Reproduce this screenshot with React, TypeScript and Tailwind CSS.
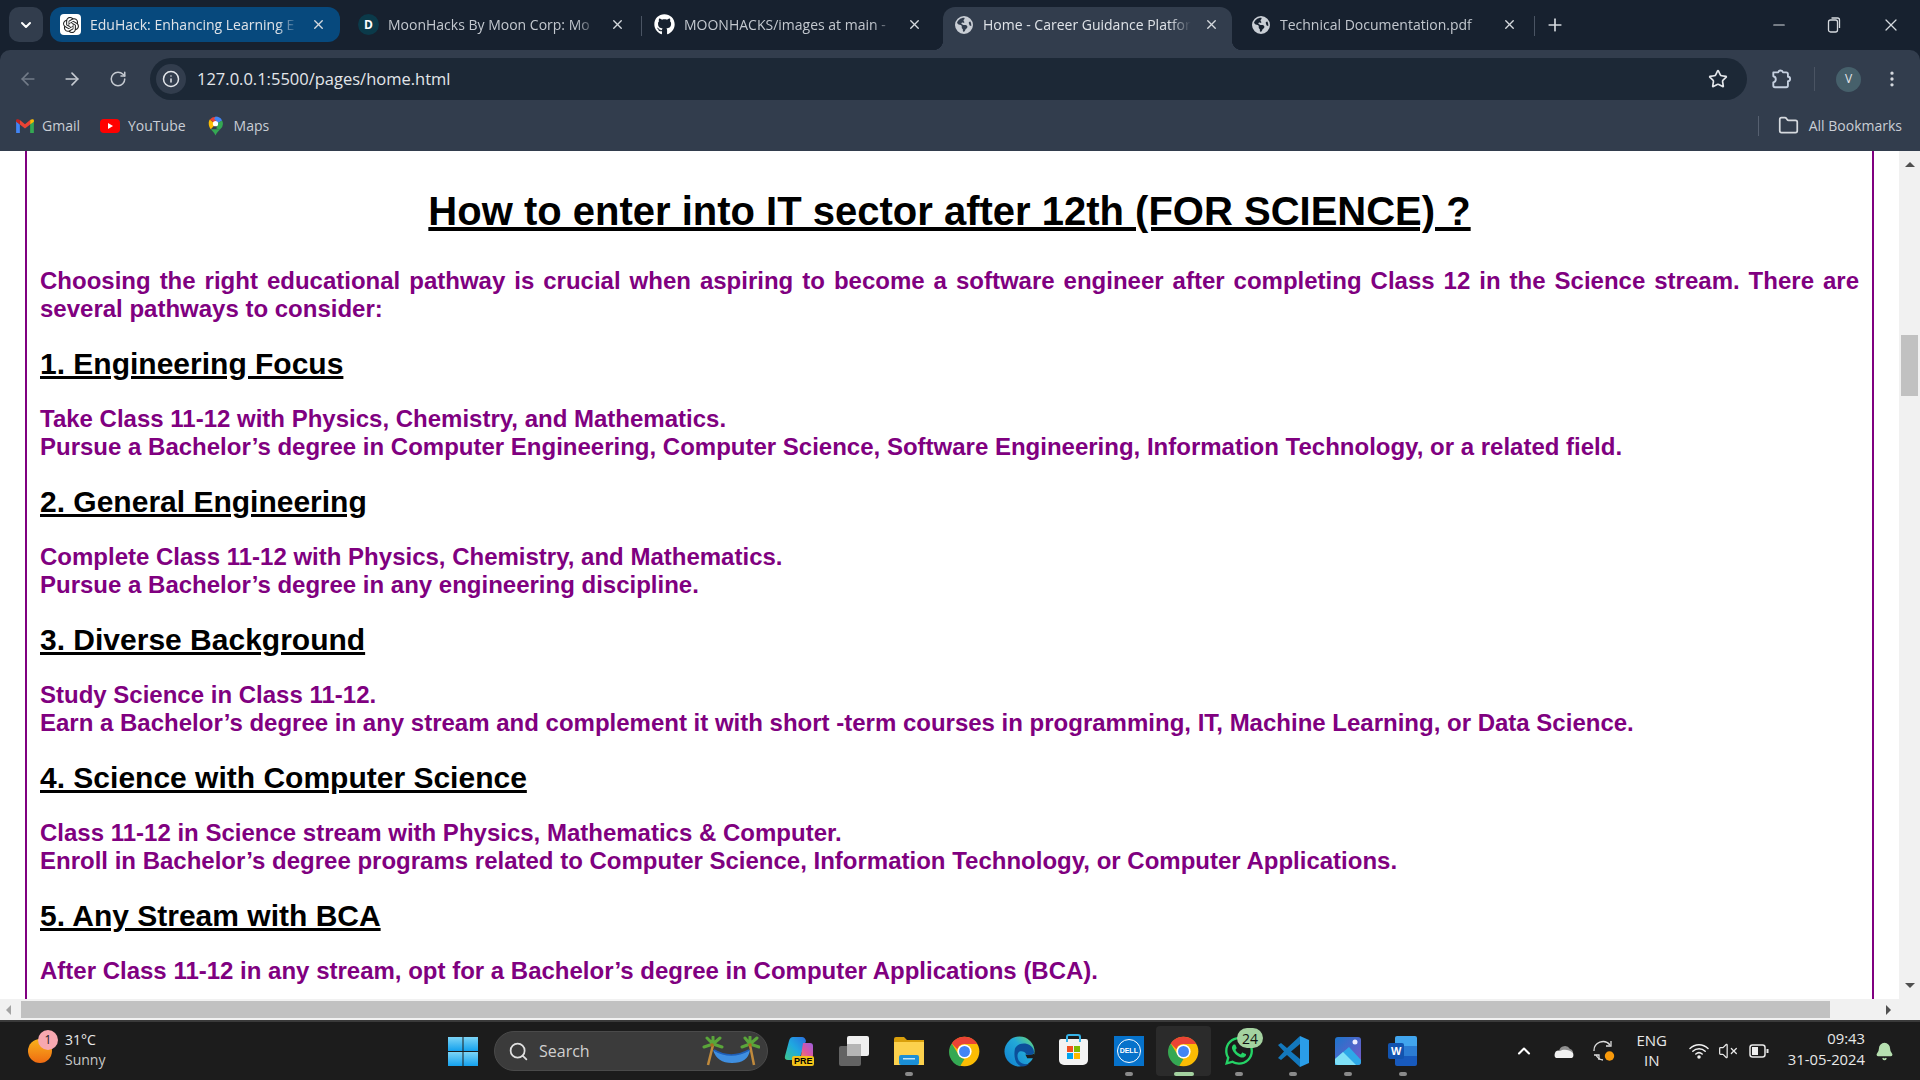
import { ReactNode } from "react";
import { ArrowLeft, ArrowRight, Bell, ChevronDown, ChevronUp, EllipsisVertical, Folder, Info, Minus, Plus, RotateCw, Search, Star, VolumeX, X } from "lucide-react";
import { FaGithub, FaWhatsapp } from "react-icons/fa";
import { FaEarthAmericas } from "react-icons/fa6";
import { SiOpenai } from "react-icons/si";

const sections = [
  {
    title: "1. Engineering Focus",
    lines: [
      "Take Class 11-12 with Physics, Chemistry, and Mathematics.",
      "Pursue a Bachelor’s degree in Computer Engineering, Computer Science, Software Engineering, Information Technology, or a related field.",
    ],
  },
  {
    title: "2. General Engineering",
    lines: ["Complete Class 11-12 with Physics, Chemistry, and Mathematics.", "Pursue a Bachelor’s degree in any engineering discipline."],
  },
  {
    title: "3. Diverse Background",
    lines: [
      "Study Science in Class 11-12.",
      "Earn a Bachelor’s degree in any stream and complement it with short -term courses in programming, IT, Machine Learning, or Data Science.",
    ],
  },
  {
    title: "4. Science with Computer Science",
    lines: [
      "Class 11-12 in Science stream with Physics, Mathematics & Computer.",
      "Enroll in Bachelor’s degree programs related to Computer Science, Information Technology, or Computer Applications.",
    ],
  },
  {
    title: "5. Any Stream with BCA",
    lines: ["After Class 11-12 in any stream, opt for a Bachelor’s degree in Computer Applications (BCA)."],
  },
];

function ChromeLogo({ size = 31 }: { size?: number }) {
  return (
    <svg width={size} height={size} viewBox="0 0 48 48">
      <circle cx="24" cy="24" r="23" fill="#fbbc04" />
      <path d="M24 1a23 23 0 0 1 19.900 11.500H24a11.500 11.500 0 0 0-10.900 7.900L4.200 11.600A23 23 0 0 1 24 1z" fill="#ea4335" />
      <path d="M4.200 11.600l10.900 17.900A11.500 11.500 0 0 0 24 35.500l-7 11.400A23 23 0 0 1 4.200 11.600z" fill="#34a853" />
      <circle cx="24" cy="24" r="11" fill="#fff" />
      <circle cx="24" cy="24" r="8.500" fill="#4285f4" />
    </svg>
  );
}

function Tab({ icon, title, width, closeGap, active, blue }: { icon: ReactNode; title: string; width: number; closeGap: number; active?: boolean; blue?: boolean }) {
  return (
    <div
      className={`relative flex shrink-0 items-center pl-[10px] ${blue ? "mb-[8px] h-[35px] rounded-[12px] bg-[#07497d]" : "h-full pb-[8px]"} ${active ? "rounded-t-[12px] bg-[#323d4d]" : ""}`}
      style={{ width }}
    >
      {active && <span className="absolute -left-[10px] bottom-0 h-[10px] w-[10px] bg-[radial-gradient(circle_at_0_0,transparent_10px,#323d4d_10.5px)]" />}
      {active && <span className="absolute -right-[10px] bottom-0 h-[10px] w-[10px] bg-[radial-gradient(circle_at_100%_0,transparent_10px,#323d4d_10.5px)]" />}
      <span className="flex h-[21px] w-[21px] shrink-0 items-center justify-center">{icon}</span>
      <span
        className={`ml-[9px] overflow-hidden whitespace-nowrap text-[14px] [mask-image:linear-gradient(90deg,#000_90%,transparent)] ${active || blue ? "text-[#dfe3e8]" : "text-[#c3c8cf]"}`}
        style={{ width: closeGap }}
      >
        {title}
      </span>
      <X size={15} strokeWidth={2.2} className="ml-[13px] shrink-0 text-[#d5d9de]" />
    </div>
  );
}

function Toolbar() {
  return (
    <div className="flex h-[50px] items-center rounded-t-[10px] bg-[#323d4d] pt-[8px]">
      <ArrowLeft size={20} className="ml-[18px] text-[#727b88]" />
      <ArrowRight size={20} className="ml-[24px] text-[#c5cad1]" />
      <RotateCw size={18} className="ml-[27px] text-[#c5cad1]" />
      <div className="ml-[23px] flex h-[42px] w-[1597px] items-center rounded-full bg-[#1c2836] pl-[6px]">
        <span className="flex h-[30px] w-[30px] items-center justify-center rounded-full bg-[#323d4d]">
          <Info size={18} className="text-[#e3e6ea]" />
        </span>
        <span className="ml-[11px] flex-1 font-['Open_Sans',sans-serif] text-[16.5px] text-[#e3e6ea]">127.0.0.1:5500/pages/home.html</span>
        <Star size={20} strokeWidth={2} className="mr-[19px] text-[#e3e6ea]" />
      </div>
      <svg width="22" height="22" viewBox="0 0 20 20" fill="none" stroke="#c5d0e0" strokeWidth="1.700" strokeLinejoin="round" className="ml-[23px]">
        <path d="M3 4h4.500a2.200 2.200 0 0 1 4.300 0h3a1.500 1.500 0 0 1 1.500 1.500V8a2 2 0 0 1 0 4v4a1.500 1.500 0 0 1-1.500 1.500H4.500A1.500 1.500 0 0 1 3 16v-3a2.800 2.800 0 0 0 0-5.500z" />
      </svg>
      <span className="ml-[22px] h-[24px] w-px bg-[#4a5463]" />
      <span className="ml-[21px] flex h-[25px] w-[25px] items-center justify-center rounded-full bg-[#46606b] text-[12px] text-[#e3e6ea]">V</span>
      <EllipsisVertical size={20} className="ml-[21px] text-[#d5d9de]" />
    </div>
  );
}

function BookmarksBar() {
  return (
    <div className="flex h-[51px] items-center bg-[#323d4d] text-[14px] text-[#c9ced5]">
      <svg width="18" height="14" viewBox="0 0 19 15" className="ml-[16px]">
        <path d="M0 2v13h4V6z" fill="#4285f4" />
        <path d="M19 2v13h-4V6z" fill="#34a853" />
        <path d="M15 1v5l4-3V1.500C19 .2 17 0 15 1z" fill="#fbbc04" />
        <path d="M4 1L9.500 5.500 15 1v5l-5.500 4.300L4 6z" fill="#ea4335" />
        <path d="M0 1.500C0 .2 2 0 4 1v5L0 3z" fill="#c5221f" />
      </svg>
      <span className="ml-[8px]">Gmail</span>
      <span className="ml-[20px] flex h-[14px] w-[20px] items-center justify-center rounded-[4px] bg-[#ff0000]">
        <span className="h-0 w-0 border-y-[3px] border-l-[5px] border-y-transparent border-l-white" />
      </span>
      <span className="ml-[8px]">YouTube</span>
      <svg width="15" height="20" viewBox="0 0 16 20" className="ml-[22px]">
        <path d="M3 13.500c2 2.500 4 4 5 6.500 1-2.500 3-4 5-6.500z" fill="#34a853" />
        <path d="M1.900 3L8 8 3 13.500C.6 10.500 0 6 1.900 3z" fill="#fbbc04" />
        <path d="M1.900 3A8 8 0 0 1 8 0l2.500 3L6 6z" fill="#ea4335" />
        <path d="M8 0a8 8 0 0 1 7 4l-4.500 3L6.500 2z" fill="#4285f4" />
        <path d="M15 4a8 8 0 0 1-2 9.500L9 13 10 7z" fill="#34a853" />
        <circle cx="8" cy="7.500" r="2.800" fill="#ffffff" />
      </svg>
      <span className="ml-[11px]">Maps</span>
      <span className="ml-auto h-[20px] w-px bg-[#566070]" />
      <Folder size={21} className="ml-[19px] text-[#d5d9de]" />
      <span className="ml-[10px] mr-[18px]">All Bookmarks</span>
    </div>
  );
}

function Page() {
  return (
    <div className="flex min-h-0 flex-1">
      <div className="flex min-w-0 flex-1 flex-col">
        <div className="min-h-0 flex-1 overflow-hidden bg-white pl-[25px] pr-[25px]">
          <div className="h-full border-x-2 border-[#800080] px-[13px] font-['Liberation_Sans',Arial,sans-serif] font-bold">
            <h1 className="pt-[37px] text-center text-[40px] leading-[46px] text-black underline">How to enter into IT sector after 12th (FOR SCIENCE) ?</h1>
            <p className="mt-[33px] text-justify text-[24px] leading-[28px] text-[#800080]">
              Choosing the right educational pathway is crucial when aspiring to become a software engineer after completing Class 12 in the Science stream. There are several pathways to consider:
            </p>
            {sections.map((s, i) => (
              <section key={s.title}>
                <h2 className={`${i === 0 ? "mt-[22px]" : "mt-[23px]"} text-[30px] leading-[37px] text-black underline`}>{s.title}</h2>
                <p className="mt-[23px] text-[24px] leading-[27.500px] text-[#800080]">
                  {s.lines.map((l) => (
                    <span key={l} className="block">
                      {l}
                    </span>
                  ))}
                </p>
              </section>
            ))}
          </div>
        </div>
      </div>
      <div className="flex w-[21px] shrink-0 flex-col items-center bg-[#f1f1f1] pt-[11px]">
        <span className="h-0 w-0 border-x-[5px] border-b-[5px] border-x-transparent border-b-[#505050]" />
        <span className="mt-[168px] h-[61px] w-[17px] bg-[#c1c1c1]" />
        <span className="mt-auto mb-[11px] h-0 w-0 border-x-[5px] border-t-[5px] border-x-transparent border-t-[#505050]" />
      </div>
    </div>
  );
}

function HScrollbar() {
  return (
    <div className="flex h-[21px] items-center bg-[#f1f1f1]">
      <span className="ml-[6px] h-0 w-0 border-y-[5px] border-r-[5px] border-y-transparent border-r-[#a3a3a3]" />
      <span className="ml-[10px] h-[17px] w-[1809px] bg-[#c1c1c1]" />
      <span className="ml-auto mr-[29px] h-0 w-0 border-y-[5px] border-l-[5px] border-y-transparent border-l-[#505050]" />
    </div>
  );
}

function TaskIcon({ children, dot, active }: { children: ReactNode; dot?: boolean; active?: boolean }) {
  return (
    <div className={`relative flex h-[50px] w-[54.900px] items-center justify-center ${active ? "rounded-[4px] bg-[#2b2b2b]" : ""}`}>
      {children}
      {dot && <span className="absolute bottom-0 h-[4px] w-[8px] rounded-full bg-[#8a8a8a]" />}
      {active && <span className="absolute bottom-0 h-[4px] w-[20px] rounded-full bg-[#a4d2a0]" />}
    </div>
  );
}

function Taskbar() {
  return (
    <div className="flex h-[60px] shrink-0 items-center border-t-2 border-[#3a3a3a] bg-[#1c1c1c] font-['Open_Sans',sans-serif] text-[#e8e8e8]">
      <div className="relative ml-[28px] h-[24px] w-[24px] rounded-full bg-gradient-to-b from-[#f7b21c] to-[#ee6a12]">
        <span className="absolute -right-[6px] -top-[9px] flex h-[20px] w-[20px] items-center justify-center rounded-full bg-[#f7a8b0] text-[12px] text-[#222]">1</span>
      </div>
      <div className="ml-[13px] w-[60px] pb-[2px] text-[14px] leading-[20px]">
        <div>31°C</div>
        <div className="text-[#c8c8c8]">Sunny</div>
      </div>
      <svg width="30" height="29" viewBox="0 0 30 29" className="ml-[323px]">
        <defs>
          <linearGradient id="win" x1="0" y1="0" x2="0" y2="1">
            <stop offset="0" stopColor="#7cd4f6" />
            <stop offset="1" stopColor="#13a1ee" />
          </linearGradient>
        </defs>
        <rect x="0" y="0" width="14.500" height="14" fill="url(#win)" />
        <rect x="15.500" y="0" width="14.500" height="14" fill="url(#win)" />
        <rect x="0" y="15" width="14.500" height="14" fill="url(#win)" />
        <rect x="15.500" y="15" width="14.500" height="14" fill="url(#win)" />
      </svg>
      <div className="ml-[16px] flex h-[40px] w-[274px] items-center rounded-full border border-[#4a4a4a] bg-[#3b3b3b] pl-[13px]">
        <Search size={21} className="text-[#e0e0e0]" />
        <span className="ml-[10px] pb-[1px] text-[16px] text-[#d0d0d0]">Search</span>
        <svg width="58" height="30" viewBox="0 0 58 30" className="ml-auto mr-[7px]">
          <path d="M6 29L11 9M52 29L48 9" stroke="#c08a3c" strokeWidth="2.500" fill="none" />
          <path d="M11 14q18 10 37 0q-2 13-18 13q-15 0-19-13z" fill="#3f8fe0" />
          <path d="M12 14q17 10 35 0" stroke="#1e5fb8" strokeWidth="1.500" fill="none" />
          <path d="M11 8L2 11M11 8l9 3M11 8L5 2M11 8l7-6M11 8L11 1" stroke="#5aa53a" strokeWidth="3" strokeLinecap="round" fill="none" />
          <path d="M48 8l-8 3M48 8l9 3M48 8L43 2M48 8l7-6M48 8V1" stroke="#5aa53a" strokeWidth="3" strokeLinecap="round" fill="none" />
          <circle cx="10" cy="9" r="1.800" fill="#a86a20" />
          <circle cx="48" cy="9" r="1.800" fill="#a86a20" />
        </svg>
      </div>
      <div className="ml-[4px] flex items-center">
        <TaskIcon>
          <div className="relative h-[30px] w-[30px]">
            <svg width="29" height="26" viewBox="0 0 29 26" className="absolute left-0 top-0">
              <defs>
                <linearGradient id="cpa" x1="0" y1="1" x2="1" y2="0">
                  <stop offset="0" stopColor="#3fc88a" />
                  <stop offset="0.500" stopColor="#1fa8e0" />
                  <stop offset="1" stopColor="#2a6fe0" />
                </linearGradient>
                <linearGradient id="cpb" x1="0" y1="1" x2="1" y2="0">
                  <stop offset="0" stopColor="#f2a13c" />
                  <stop offset="0.500" stopColor="#e0559c" />
                  <stop offset="1" stopColor="#9a5fe0" />
                </linearGradient>
              </defs>
              <path d="M9 1h9q3 0 4 4l-6 16q-1 3-4 3H4q-4 0-3-4l4-15q1-4 4-4z" fill="url(#cpa)" />
              <path d="M19 7h7q3 0 3 3v9q0 5-6 5H14q2-1 3-4z" fill="url(#cpb)" />
            </svg>
            <span className="absolute bottom-0 right-0 rounded-[2px] bg-[#f2c21a] px-[2px] font-['Liberation_Sans',sans-serif] text-[9px] font-bold leading-[10px] text-black">PRE</span>
          </div>
        </TaskIcon>
        <TaskIcon>
          <div className="relative h-[30px] w-[30px]">
            <span className="absolute bottom-0 left-0 h-[20px] w-[22px] rounded-[2px] bg-[#636363]" />
            <span className="absolute right-0 top-0 h-[20px] w-[22px] rounded-[2px] bg-[#f0f0f0]" />
            <span className="absolute left-[8px] top-[8px] h-[12px] w-[14px] bg-[#b5b5b5]" />
          </div>
        </TaskIcon>
        <TaskIcon dot>
          <svg width="30" height="28" viewBox="0 0 30 28">
            <path d="M0 2q0-2 2-2h8l3 3h17v25H0z" fill="#d99f0b" />
            <rect x="0" y="5" width="30" height="23" fill="#fcd14d" />
            <rect x="5" y="18" width="20" height="10" rx="2" fill="#1b8fd6" />
            <rect x="9" y="21" width="12" height="1.500" fill="#bfe3f7" />
          </svg>
        </TaskIcon>
        <TaskIcon>
          <ChromeLogo />
        </TaskIcon>
        <TaskIcon>
          <svg width="31" height="31" viewBox="0 0 32 32">
            <defs>
              <linearGradient id="edg" x1="0" y1="1" x2="1" y2="0">
                <stop offset="0" stopColor="#0f7fd0" />
                <stop offset="0.600" stopColor="#23a9d8" />
                <stop offset="1" stopColor="#6fdc6a" />
              </linearGradient>
            </defs>
            <circle cx="16" cy="16" r="15.500" fill="url(#edg)" />
            <path d="M11 15c0-5 6-8 12-7 5 1 8 5 8 9-1 3-5 3-8 2-1-3-5-4-7-3-2 1-3 5-1 9 2 3 6 5 11 4-3 2-6 3-9 2-5-2-7-9-6-16z" fill="#0c4f9a" />
            <path d="M22 19c3 1 6 1 9-1l1 5h-8z" fill="#1c1c1c" />
          </svg>
        </TaskIcon>
        <TaskIcon>
          <div className="relative mt-[2px] flex h-[26px] w-[29px] items-center justify-center rounded-b-[5px] rounded-t-[2px] bg-[#f3f3f3]">
            <span className="absolute -top-[5px] left-[7px] h-[8px] w-[15px] rounded-t-[3px] border-2 border-b-0 border-[#36b3e8]" />
            <span className="grid grid-cols-2 gap-px">
              <span className="h-[6px] w-[6px] bg-[#f25022]" />
              <span className="h-[6px] w-[6px] bg-[#7fba00]" />
              <span className="h-[6px] w-[6px] bg-[#00a4ef]" />
              <span className="h-[6px] w-[6px] bg-[#ffb900]" />
            </span>
          </div>
        </TaskIcon>
        <TaskIcon dot>
          <div className="flex h-[30px] w-[30px] items-center justify-center bg-[#0672cb]">
            <span className="flex h-[24px] w-[24px] items-center justify-center rounded-full border-[1.5px] border-white font-['Liberation_Sans',sans-serif] text-[7px] font-bold text-white">DELL</span>
          </div>
        </TaskIcon>
        <TaskIcon active>
          <ChromeLogo />
        </TaskIcon>
        <TaskIcon dot>
          <FaWhatsapp size={32} className="text-[#25d366]" />
          <span className="absolute right-[3px] top-[2px] flex h-[20px] w-[26px] items-center justify-center rounded-full bg-[#a4d2a0] text-[14px] text-[#111]">24</span>
        </TaskIcon>
        <TaskIcon dot>
          <svg width="31" height="31" viewBox="0 0 31 31">
            <path d="M22 0l9 4v23l-9 4z" fill="#2a9de8" />
            <path d="M22 0v31L9 19 3 24 0 22l6-6.500L0 9l3-2 6 5z" fill="#1378bd" />
            <path d="M22 8l-9 7.500 9 7.500z" fill="#1c1c1c" />
          </svg>
        </TaskIcon>
        <TaskIcon dot>
          <svg width="26" height="28" viewBox="0 0 26 28">
            <defs>
              <linearGradient id="pho" x1="0" y1="0" x2="1" y2="1">
                <stop offset="0" stopColor="#1c75cc" />
                <stop offset="1" stopColor="#7c58c8" />
              </linearGradient>
            </defs>
            <rect width="26" height="28" rx="3" fill="url(#pho)" />
            <path d="M14 10l12 13v2a3 3 0 0 1-3 3H0v-6z" fill="#2ea8e8" />
            <path d="M0 22l8-7 13 13H3a3 3 0 0 1-3-3z" fill="#7fe0f7" />
            <circle cx="20" cy="5" r="2.500" fill="#eeeeff" />
          </svg>
        </TaskIcon>
        <TaskIcon dot>
          <div className="relative h-[30px] w-[30px]">
            <div className="ml-[7px] grid h-[30px] w-[22px] grid-rows-3 overflow-hidden rounded-[2px]">
              <span className="bg-[#41a5ee]" />
              <span className="bg-[#2b7cd3]" />
              <span className="bg-[#185abd]" />
            </div>
            <span className="absolute left-0 top-[7px] flex h-[16px] w-[16px] items-center justify-center rounded-[2px] bg-[#1254b0] font-['Liberation_Sans',sans-serif] text-[11px] font-bold text-white">W</span>
          </div>
        </TaskIcon>
      </div>
      <ChevronUp size={20} strokeWidth={2.500} className="ml-[83px] text-white" />
      <svg width="20" height="15" viewBox="0 0 20 15" className="ml-[20px]">
        <path d="M5 7a6 6 0 0 1 11-2 4 4 0 0 1 3 4z" fill="#8e8e8e" />
        <path d="M1 9a3.500 3.500 0 0 1 5-2c3-2 9-2 13 2 1 3 0 5-2 5H3c-2 0-3-2-2-5z" fill="#f0f0f0" />
      </svg>
      <svg width="22" height="22" viewBox="0 0 22 22" fill="none" stroke="#dcdcdc" strokeWidth="1.300" className="ml-[19px]">
        <path d="M1 11a9 9 0 0 1 16-6" />
        <path d="M18 1v5h-5" />
        <path d="M3 15a9 9 0 0 0 7 5" />
        <path d="M1 15h5v5" />
        <circle cx="16.500" cy="16" r="4.700" fill="#f99a0b" stroke="none" />
      </svg>
      <div className="ml-[21px] w-[32px] pb-[2px] text-center text-[15px] leading-[20px]">
        <div>ENG</div>
        <div>IN</div>
      </div>
      <svg width="20" height="16" viewBox="0 0 20 16" fill="none" stroke="#f0f0f0" strokeWidth="1.500" strokeLinecap="round" className="ml-[21px]">
        <path d="M1 5.500c5-5 13-5 18 0" />
        <path d="M3.800 8.300c3.500-3.300 9-3.300 12.400 0" />
        <path d="M6.800 11c2-1.700 4.400-1.700 6.400 0" />
        <circle cx="10" cy="14" r="1" fill="#f0f0f0" />
      </svg>
      <VolumeX size={20} strokeWidth={1.500} className="ml-[9px]" />
      <svg width="20" height="14" viewBox="0 0 20 14" className="ml-[11px]">
        <rect x="1" y="1" width="15" height="12" rx="2.500" fill="none" stroke="#e8e8e8" strokeWidth="1.500" />
        <rect x="3" y="3" width="6" height="8" fill="#f0f0f0" />
        <rect x="17.500" y="5" width="2" height="4" fill="#e8e8e8" />
      </svg>
      <div className="ml-auto pb-[4px] text-right text-[14.8px] leading-[21px]">
        <div>09:43</div>
        <div>31-05-2024</div>
      </div>
      <Bell size={19} fill="#b6e0b0" className="ml-[10px] mr-[26px] text-[#b6e0b0]" />
    </div>
  );
}

export default function App() {
  return (
    <div className="flex h-[1080px] w-[1920px] flex-col overflow-hidden bg-[#17212f] font-['Open_Sans',sans-serif]">
      <div className="flex h-[50px] shrink-0 items-end">
        <span className="mb-[8px] ml-[9px] flex h-[35px] w-[34px] items-center justify-center rounded-[10px] bg-[#323d4d] text-white">
          <ChevronDown size={16} strokeWidth={3} />
        </span>
        <div className="ml-[7px] flex h-[43px] items-end">
          <Tab blue width={290} closeGap={208} title="EduHack: Enhancing Learning E" icon={<span className="flex h-[21px] w-[21px] items-center justify-center rounded-[4px] bg-white text-[#222]"><SiOpenai size={16} /></span>} />
        </div>
        <div className="ml-[8px] flex h-[43px] items-end">
          <Tab width={293} closeGap={209} title="MoonHacks By Moon Corp: Mo" icon={<span className="flex h-[21px] w-[21px] items-center justify-center rounded-full bg-[#0b3a4a] text-[12px] font-bold text-white">D</span>} />
          <span className="mb-[14px] h-[20px] w-px bg-[#4a5463]" />
        </div>
        <div className="ml-[2px] flex h-[43px] items-end">
          <Tab width={299} closeGap={210} title="MOONHACKS/images at main -" icon={<FaGithub size={21} className="text-white" />} />
        </div>
        <div className="flex h-[43px] items-end">
          <Tab active width={289} closeGap={208} title="Home - Career Guidance Platfor" icon={<FaEarthAmericas size={18} className="text-[#c9ced5]" />} />
        </div>
        <div className="ml-[8px] flex h-[43px] items-end">
          <Tab width={294} closeGap={209} title="Technical Documentation.pdf" icon={<FaEarthAmericas size={18} className="text-[#c9ced5]" />} />
          <span className="mb-[14px] h-[20px] w-px bg-[#4a5463]" />
        </div>
        <Plus size={20} className="mb-[15px] ml-[10px] text-[#d5d9de]" />
        <Minus size={18} strokeWidth={1.500} className="mb-[16px] ml-[205px] text-[#d5d9de]" />
        <svg width="14" height="16" viewBox="0 0 14 16" className="mb-[17px] ml-[39px] text-[#d5d9de]">
          <rect x="1.500" y="3" width="9" height="12" rx="2" fill="none" stroke="currentColor" strokeWidth="1.300" />
          <path d="M4.500 1h6a2 2 0 0 1 2 2v8" fill="none" stroke="currentColor" strokeWidth="1.300" />
        </svg>
        <X size={20} strokeWidth={1.500} className="mb-[15px] ml-[40px] text-[#d5d9de]" />
      </div>
      <Toolbar />
      <BookmarksBar />
      <Page />
      <HScrollbar />
      <Taskbar />
    </div>
  );
}
